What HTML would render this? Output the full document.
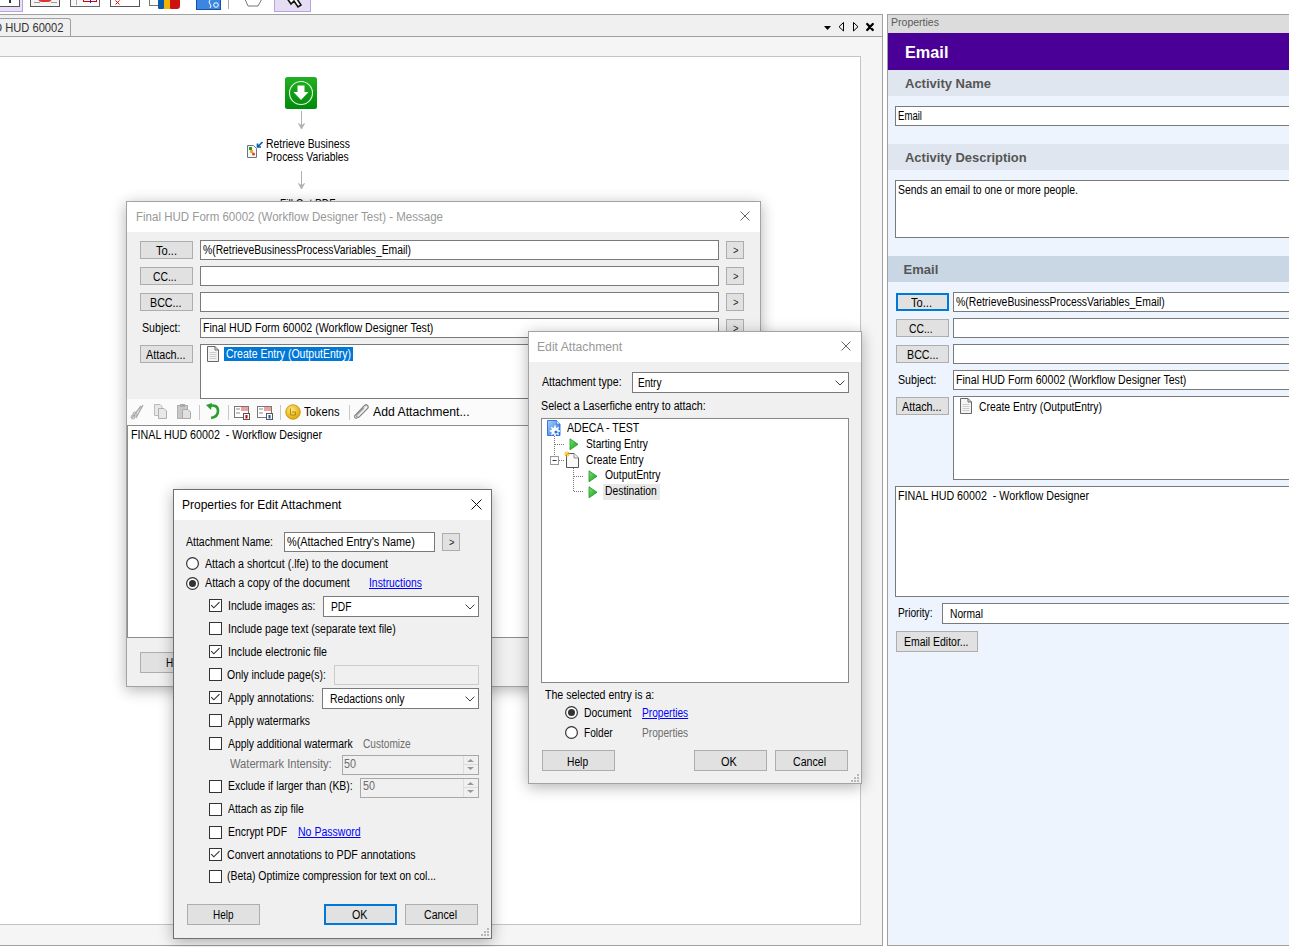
<!DOCTYPE html>
<html><head><meta charset="utf-8">
<style>
*{box-sizing:border-box;margin:0;padding:0}
html,body{width:1289px;height:947px;overflow:hidden;background:#fff;font-family:"Liberation Sans",sans-serif;font-size:12px;color:#000}
body{position:relative}
.a{position:absolute}
.t{position:absolute;white-space:nowrap;line-height:1;transform-origin:0 0}
</style></head><body>
<div class="a" style="left:0px;top:0px;width:1289px;height:15px;background:#fff;"></div>
<div class="a" id="tb"></div>
<div class="a" style="left:-2px;top:-2px;width:25px;height:14px;background:#e8e0f4;border:1px solid #b9a3e3;"></div>
<div class="a" style="left:-2px;top:-2px;width:22px;height:9px;background:#fff;border:1px solid #555;"></div>
<div class="a" style="left:9px;top:0px;width:2px;height:3px;background:#334;"></div>
<div class="a" style="left:30px;top:-2px;width:30px;height:9px;background:#f4f4f4;border:1px solid #555;"></div>
<div class="a" style="left:38px;top:-2px;width:14px;height:4px;background:#d33;border-radius:0 0 7px 7px"></div>
<div class="a" style="left:34px;top:2px;width:6px;height:1px;background:#999;"></div>
<div class="a" style="left:51px;top:2px;width:6px;height:1px;background:#999;"></div>
<div class="a" style="left:70px;top:-2px;width:30px;height:9px;background:#f8f8f8;border:1px solid #666;"></div>
<div class="a" style="left:76px;top:-2px;width:1px;height:7px;background:#aaa;"></div>
<div class="a" style="left:83px;top:-2px;width:14px;height:4px;background:#fff;border:1px solid #d00;"></div>
<div class="a" style="left:90px;top:-2px;width:1px;height:5px;background:#22c;"></div>
<div class="a" style="left:110px;top:-2px;width:30px;height:9px;background:#fff;border:1px solid #555;"></div>
<svg class="a" style="left:115px;top:0" width="6" height="5"><path d="M0.5 0.5 L4.5 4.5 M4.5 0.5 L0.5 4.5" stroke="#e00" stroke-width="1"/></svg>
<div class="a" style="left:149px;top:-2px;width:12px;height:8px;background:#fff;border:1px solid #777;"></div>
<div class="a" style="left:158px;top:-2px;width:6px;height:11px;background:#0a5aa8;border-radius:0 0 1px 1px"></div>
<div class="a" style="left:164px;top:-2px;width:6px;height:11px;background:#f0b400;"></div>
<div class="a" style="left:170px;top:-2px;width:10px;height:11px;background:#cc1111;border-radius:0 0 3px 1px"></div>
<div class="a" style="left:196px;top:-2px;width:25px;height:12px;background:#3b86e0;border:1px solid #1a4fa8;"></div>
<svg class="a" style="left:208px;top:0" width="12" height="9"><path d="M2 0 Q0 2 2 4 Q4 6 2 8" fill="none" stroke="#fff" stroke-width="1"/><circle cx="8" cy="5" r="2.3" fill="none" stroke="#fff" stroke-width="1"/></svg>
<div class="a" style="left:228px;top:-2px;width:1px;height:11px;background:#aaa;"></div>
<svg class="a" style="left:243px;top:-3" width="21" height="11"><path d="M1 0 L5 9 L15 9 L20 0" fill="#fff" stroke="#777" stroke-width="1"/></svg>
<div class="a" style="left:274px;top:-2px;width:37px;height:14px;background:#e6ddf2;border:1px solid #b7a2e3;"></div>
<svg class="a" style="left:283px;top:-6" width="20" height="16"><path d="M1 0 L1 0 L8 10 L11 7 L15 13 L18 11 L14 5 L18 3 Z" fill="#fff" stroke="#111" stroke-width="1.6"/><path d="M1 0 L7 0 L4 4 Z" fill="#111"/></svg>
<div class="a" style="left:-1px;top:14px;width:884px;height:932px;background:#f5f5f5;border:1px solid #a0a0a0;"></div>
<div class="a" style="left:0px;top:15px;width:882px;height:21px;background:#f0f0f0;"></div>
<div class="a" style="left:0px;top:36px;width:882px;height:1px;background:#a0a0a0;"></div>
<div class="a" style="left:-6px;top:18px;width:77px;height:18px;background:#f0f0f0;border:1px solid #a0a0a0;border-bottom:none;border-radius:0 3px 0 0"></div>
<div class="t" style="left:-6px;top:22.14px;font-size:12px;color:#333;transform:scaleX(0.9303);">D HUD 60002</div>
<svg class="a" style="left:824px;top:26px" width="8" height="5"><path d="M0 0 L7 0 L3.5 4 Z" fill="#000"/></svg>
<svg class="a" style="left:838px;top:22px" width="7" height="10"><path d="M5.5 0.5 L5.5 9 L1 4.75 Z" fill="none" stroke="#000" stroke-width="1"/></svg>
<svg class="a" style="left:852px;top:22px" width="7" height="10"><path d="M1.5 0.5 L1.5 9 L6 4.75 Z" fill="none" stroke="#000" stroke-width="1"/></svg>
<svg class="a" style="left:865px;top:22px" width="10" height="10"><path d="M2.2 2 L7.8 8 M7.8 2 L2.2 8" fill="none" stroke="#000" stroke-width="2.3" stroke-linecap="round"/></svg>
<div class="a" style="left:-1px;top:56px;width:862px;height:869px;background:#fff;border:1px solid #c4c4c4;"></div>
<svg class="a" style="left:284px;top:76px" width="34" height="34">
<defs><linearGradient id="gg" x1="0" y1="0" x2="0" y2="1"><stop offset="0" stop-color="#22b022"/><stop offset="1" stop-color="#008a0a"/></linearGradient></defs>
<rect x="1" y="1" width="32" height="32" rx="2.5" fill="url(#gg)"/>
<circle cx="17" cy="17" r="11.5" fill="none" stroke="#e8f5e8" stroke-width="1.1"/>
<path d="M13.5 9.5 L20.5 9.5 L20.5 16 L24.5 16 L17 24 L9.5 16 L13.5 16 Z" fill="#fff"/>
</svg>
<svg class="a" style="left:296px;top:110px" width="11" height="20"><path d="M5.5 1 L5.5 16" stroke="#b0b0b0" stroke-width="1"/><path d="M2.5 13.5 L5.5 19 L8.5 13.5 L5.5 15.5 Z" fill="#b0b0b0" stroke="#b0b0b0" stroke-width="0.8" stroke-linejoin="round"/></svg>
<svg class="a" style="left:296px;top:170px" width="11" height="20"><path d="M5.5 1 L5.5 16" stroke="#b0b0b0" stroke-width="1"/><path d="M2.5 13.5 L5.5 19 L8.5 13.5 L5.5 15.5 Z" fill="#b0b0b0" stroke="#b0b0b0" stroke-width="0.8" stroke-linejoin="round"/></svg>
<svg class="a" style="left:246px;top:141px" width="18" height="18">
<path d="M1.5 4.5 L7.5 4.5 L10.5 7.5 L10.5 16.5 L1.5 16.5 Z" fill="#f8f8f8" stroke="#6a7484" stroke-width="1"/>
<rect x="3" y="6" width="3" height="3" fill="#2a9a2a"/><rect x="4" y="9" width="3" height="3" fill="#e8b020"/><circle cx="7.5" cy="13" r="1.5" fill="#e04020"/>
<path d="M16.5 1 L11.5 6 M11.5 2.5 L11.5 6 L15 6" fill="none" stroke="#0a62aa" stroke-width="1.7"/>
</svg>
<div class="t" style="left:266.3px;top:138.14px;font-size:12px;color:#000;transform:scaleX(0.8675);">Retrieve Business</div>
<div class="t" style="left:266.3px;top:150.84px;font-size:12px;color:#000;transform:scaleX(0.8640);">Process Variables</div>
<div class="t" style="left:280.4px;top:198.34px;font-size:12px;color:#000;transform:scaleX(0.8478);">Fill Out PDF</div>
<div class="a" style="left:887px;top:14px;width:410px;height:932px;background:#edf4fe;border:1px solid #a0a0a0;"></div>
<div class="a" style="left:888px;top:15px;width:401px;height:18px;background:#dcdcdc;"></div>
<div class="t" style="left:891px;top:17.39px;font-size:11px;color:#5a5a5a;transform:scaleX(0.9573);">Properties</div>
<div class="a" style="left:888px;top:33px;width:401px;height:37px;background:#4a0096;"></div>
<div class="t" style="left:904.5px;top:45.46px;font-size:16px;color:#fff;font-weight:bold;transform:scaleX(1.0167);">Email</div>
<div class="a" style="left:888px;top:70px;width:401px;height:26px;background:#dfe6ef;"></div>
<div class="t" style="left:905px;top:76.70px;font-size:13px;color:#555;font-weight:bold;">Activity Name</div>
<div class="a" style="left:895px;top:106px;width:400px;height:20px;background:#fff;border:1px solid #7a7a7a;"></div>
<div class="t" style="left:898px;top:109.84px;font-size:12px;color:#000;transform:scaleX(0.7996);">Email</div>
<div class="a" style="left:888px;top:144px;width:401px;height:26px;background:#dfe6ef;"></div>
<div class="t" style="left:905px;top:151.00px;font-size:13px;color:#555;font-weight:bold;transform:scaleX(0.9968);">Activity Description</div>
<div class="a" style="left:895px;top:180px;width:400px;height:58px;background:#fff;border:1px solid #7a7a7a;"></div>
<div class="t" style="left:898px;top:183.84px;font-size:12px;color:#000;transform:scaleX(0.8704);">Sends an email to one or more people.</div>
<div class="a" style="left:888px;top:256px;width:401px;height:26px;background:#c9d6e4;"></div>
<div class="t" style="left:903.6px;top:263.00px;font-size:13px;color:#555;font-weight:bold;">Email</div>
<div class="a" style="left:896px;top:293px;width:53px;height:18px;background:#e1e1e1;border:2px solid #0078d7;"></div>
<div class="t" style="left:911px;top:297.04px;font-size:12px;color:#000;transform:scaleX(0.9256);">To...</div>
<div class="a" style="left:953px;top:292px;width:340px;height:20px;background:#fff;border:1px solid #7a7a7a;"></div>
<div class="t" style="left:955.5px;top:295.64px;font-size:12px;color:#000;transform:scaleX(0.8657);">%(RetrieveBusinessProcessVariables_Email)</div>
<div class="a" style="left:896px;top:319px;width:53px;height:18px;background:#e1e1e1;border:1px solid #adadad;"></div>
<div class="t" style="left:909.3px;top:323.04px;font-size:12px;color:#000;transform:scaleX(0.8631);">CC...</div>
<div class="a" style="left:953px;top:318px;width:340px;height:20px;background:#fff;border:1px solid #7a7a7a;"></div>
<div class="a" style="left:896px;top:345px;width:53px;height:18px;background:#e1e1e1;border:1px solid #adadad;"></div>
<div class="t" style="left:906.5px;top:348.84px;font-size:12px;color:#000;transform:scaleX(0.8912);">BCC...</div>
<div class="a" style="left:953px;top:344px;width:340px;height:20px;background:#fff;border:1px solid #7a7a7a;"></div>
<div class="t" style="left:897.9px;top:373.84px;font-size:12px;color:#000;transform:scaleX(0.8879);">Subject:</div>
<div class="a" style="left:953px;top:370px;width:340px;height:20px;background:#fff;border:1px solid #7a7a7a;"></div>
<div class="t" style="left:956.3px;top:373.84px;font-size:12px;color:#000;transform:scaleX(0.8851);">Final HUD Form 60002 (Workflow Designer Test)</div>
<div class="a" style="left:896px;top:397px;width:53px;height:18px;background:#e1e1e1;border:1px solid #adadad;"></div>
<div class="t" style="left:902px;top:401.24px;font-size:12px;color:#000;transform:scaleX(0.8994);">Attach...</div>
<div class="a" style="left:953px;top:396px;width:340px;height:84px;background:#fff;border:1px solid #7a7a7a;"></div>
<div class="t" style="left:978.6px;top:400.54px;font-size:12px;color:#000;transform:scaleX(0.8611);">Create Entry (OutputEntry)</div>
<svg class="a" style="left:959px;top:397px" width="14" height="18"><path d="M1.5 1.5 L9 1.5 L12.5 5 L12.5 16.5 L1.5 16.5 Z" fill="#f4f4f4" stroke="#666" stroke-width="1"/><path d="M9 1.5 L9 5 L12.5 5" fill="none" stroke="#666"/><path d="M3.5 7.5 H10.5 M3.5 9.5 H10.5 M3.5 11.5 H10.5 M3.5 13.5 H10.5" stroke="#ccc" stroke-width="1"/></svg>
<div class="a" style="left:895px;top:486px;width:400px;height:111px;background:#fff;border:1px solid #7a7a7a;"></div>
<div class="t" style="left:898px;top:489.84px;font-size:12px;color:#000;transform:scaleX(0.8922);">FINAL HUD 60002&nbsp; - Workflow Designer</div>
<div class="t" style="left:898px;top:606.84px;font-size:12px;color:#000;transform:scaleX(0.8483);">Priority:</div>
<div class="a" style="left:942px;top:603px;width:350px;height:21px;background:#fff;border:1px solid #7a7a7a;"></div>
<div class="t" style="left:950px;top:607.84px;font-size:12px;color:#000;transform:scaleX(0.8533);">Normal</div>
<div class="a" style="left:896px;top:631px;width:82px;height:21px;background:#e1e1e1;border:1px solid #adadad;"></div>
<div class="t" style="left:904px;top:636.14px;font-size:12px;color:#000;transform:scaleX(0.8713);">Email Editor...</div>
<div class="a" style="left:126px;top:201px;width:635px;height:486px;background:#f0f0f0;border:1px solid #a3a3a3;box-shadow:0 3px 14px rgba(0,0,0,0.30);"></div>
<div class="a" style="left:127px;top:202px;width:633px;height:30px;background:#fff;"></div>
<div class="t" style="left:135.5px;top:211.44px;font-size:12px;color:#999;transform:scaleX(0.9604);">Final HUD Form 60002 (Workflow Designer Test) - Message</div>
<svg class="a" style="left:740px;top:211px" width="10" height="10"><path d="M0.5 0.5 L9.5 9.5 M9.5 0.5 L0.5 9.5" fill="none" stroke="#666" stroke-width="1"/></svg>
<div class="a" style="left:140px;top:241px;width:53px;height:18px;background:#e1e1e1;border:1px solid #adadad;"></div>
<div class="t" style="left:155.8px;top:245.14px;font-size:12px;color:#000;transform:scaleX(0.9256);">To...</div>
<div class="a" style="left:200px;top:240px;width:519px;height:20px;background:#fff;border:1px solid #7a7a7a;"></div>
<div class="t" style="left:203px;top:244.14px;font-size:12px;color:#000;transform:scaleX(0.8623);">%(RetrieveBusinessProcessVariables_Email)</div>
<div class="a" style="left:726px;top:241px;width:18px;height:18px;background:#e1e1e1;border:1px solid #adadad;"></div>
<div class="t" style="left:732.5px;top:245.84px;font-size:10px;color:#222;transform:scaleX(0.9412);">&gt;</div>
<div class="a" style="left:726px;top:267px;width:18px;height:18px;background:#e1e1e1;border:1px solid #adadad;"></div>
<div class="t" style="left:732.5px;top:271.84px;font-size:10px;color:#222;transform:scaleX(0.9412);">&gt;</div>
<div class="a" style="left:726px;top:293px;width:18px;height:18px;background:#e1e1e1;border:1px solid #adadad;"></div>
<div class="t" style="left:732.5px;top:297.84px;font-size:10px;color:#222;transform:scaleX(0.9412);">&gt;</div>
<div class="a" style="left:726px;top:319px;width:18px;height:18px;background:#e1e1e1;border:1px solid #adadad;"></div>
<div class="t" style="left:732.5px;top:323.84px;font-size:10px;color:#222;transform:scaleX(0.9412);">&gt;</div>
<div class="a" style="left:140px;top:267px;width:53px;height:18px;background:#e1e1e1;border:1px solid #adadad;"></div>
<div class="t" style="left:153.3px;top:271.14px;font-size:12px;color:#000;transform:scaleX(0.8631);">CC...</div>
<div class="a" style="left:200px;top:266px;width:519px;height:20px;background:#fff;border:1px solid #7a7a7a;"></div>
<div class="a" style="left:140px;top:293px;width:53px;height:18px;background:#e1e1e1;border:1px solid #adadad;"></div>
<div class="t" style="left:149.5px;top:297.14px;font-size:12px;color:#000;transform:scaleX(0.8912);">BCC...</div>
<div class="a" style="left:200px;top:292px;width:519px;height:20px;background:#fff;border:1px solid #7a7a7a;"></div>
<div class="t" style="left:142.2px;top:322.14px;font-size:12px;color:#000;transform:scaleX(0.8879);">Subject:</div>
<div class="a" style="left:200px;top:318px;width:519px;height:20px;background:#fff;border:1px solid #7a7a7a;"></div>
<div class="t" style="left:203px;top:322.14px;font-size:12px;color:#000;transform:scaleX(0.8851);">Final HUD Form 60002 (Workflow Designer Test)</div>
<div class="a" style="left:140px;top:345px;width:53px;height:18px;background:#e1e1e1;border:1px solid #adadad;"></div>
<div class="t" style="left:146px;top:349.24px;font-size:12px;color:#000;transform:scaleX(0.8994);">Attach...</div>
<div class="a" style="left:200px;top:344px;width:560px;height:55px;background:#fff;border:1px solid #7a7a7a;"></div>
<svg class="a" style="left:206px;top:345px" width="14" height="18"><path d="M1.5 1.5 L9 1.5 L12.5 5 L12.5 16.5 L1.5 16.5 Z" fill="#f4f4f4" stroke="#666" stroke-width="1"/><path d="M9 1.5 L9 5 L12.5 5" fill="none" stroke="#666"/><path d="M3.5 7.5 H10.5 M3.5 9.5 H10.5 M3.5 11.5 H10.5 M3.5 13.5 H10.5" stroke="#ccc" stroke-width="1"/></svg>
<div class="a" style="left:224px;top:347px;width:129px;height:14px;background:#0078d7;"></div>
<div class="t" style="left:225.5px;top:347.94px;font-size:12px;color:#fff;transform:scaleX(0.8758);">Create Entry (OutputEntry)</div>
<div class="a" style="left:127px;top:399px;width:633px;height:26px;background:#fbfbfb;"></div>
<svg class="a" style="left:130px;top:403px" width="16" height="17"><path d="M2 15 L11 3 M6 15 L13 2" stroke="#a8a8a8" stroke-width="1.3"/><circle cx="3" cy="14" r="2" fill="none" stroke="#a8a8a8"/><circle cx="5" cy="11" r="2" fill="none" stroke="#a8a8a8"/></svg>
<svg class="a" style="left:153px;top:403px" width="16" height="17"><path d="M1.5 1.5 H7 L9 3.5 V12.5 H1.5 Z" fill="#e8e8e8" stroke="#bbb"/><path d="M5.5 5.5 H11 L13.5 8 V15.5 H5.5 Z" fill="#e8e8e8" stroke="#b0b0b0"/></svg>
<svg class="a" style="left:176px;top:403px" width="16" height="17"><rect x="1.5" y="2.5" width="10" height="13" fill="#c8c8c8" stroke="#b0b0b0"/><rect x="4" y="1" width="5" height="3" fill="#aaa"/><path d="M6.5 6.5 H12 L14.5 9 V15.5 H6.5 Z" fill="#e0e0e0" stroke="#aaa"/></svg>
<div class="a" style="left:199px;top:405px;width:1px;height:15px;background:#c8c8c8;"></div>
<svg class="a" style="left:205px;top:403px" width="16" height="17"><path d="M4 3 Q13 1 13 8 Q13 14 6 15" fill="none" stroke="#2aa02a" stroke-width="2.6"/><path d="M1 2 L7 0 L6 7 Z" fill="#2aa02a"/></svg>
<div class="a" style="left:228px;top:405px;width:1px;height:15px;background:#c8c8c8;"></div>
<svg class="a" style="left:234px;top:405px" width="17" height="15"><rect x="0.5" y="1.5" width="14" height="11" fill="#fff" stroke="#777"/><rect x="7" y="2" width="7" height="4" fill="#f0a0a0"/><path d="M2 4 H6 M2 8 H6" stroke="#888"/><rect x="9.5" y="8.5" width="6" height="6" fill="#fff" stroke="#555"/><rect x="11.5" y="10" width="2" height="3.5" fill="#c00"/></svg>
<svg class="a" style="left:257px;top:405px" width="17" height="15"><rect x="0.5" y="1.5" width="14" height="11" fill="#fff" stroke="#777"/><rect x="7" y="2" width="7" height="4" fill="#f0a0a0"/><path d="M2 4 H6 M2 8 H6" stroke="#888"/><rect x="9.5" y="8.5" width="6" height="6" fill="#fff" stroke="#555"/><rect x="11.5" y="10" width="2" height="3.5" fill="#1a50b0"/></svg>
<div class="a" style="left:280px;top:405px;width:1px;height:15px;background:#c8c8c8;"></div>
<svg class="a" style="left:285px;top:404px" width="16" height="16"><defs><radialGradient id="cg" cx="0.4" cy="0.35" r="0.7"><stop offset="0" stop-color="#ffe680"/><stop offset="1" stop-color="#d9a400"/></radialGradient></defs><circle cx="8" cy="8" r="7.3" fill="url(#cg)" stroke="#c89000" stroke-width="0.8"/><path d="M5.5 4.5 V11 H10.5 V8 H7" fill="none" stroke="#b88a00" stroke-width="1"/></svg>
<div class="t" style="left:304.2px;top:405.74px;font-size:12px;color:#000;transform:scaleX(0.9334);">Tokens</div>
<div class="a" style="left:349px;top:405px;width:1px;height:15px;background:#c8c8c8;"></div>
<svg class="a" style="left:353px;top:403px" width="17" height="17"><path d="M4 15.5 Q1.5 15.5 1.5 13 L11.5 2.5 Q13 1 14.5 2.5 Q16 4 14.5 5.5 L6 14 Q5 15 4 14 Q3 13 4 12 L11 5" fill="none" stroke="#8a8a8a" stroke-width="1.2"/><path d="M3 13 L12 3.5 Q13.2 2.3 14 3.2" fill="none" stroke="#bbb" stroke-width="0.8"/></svg>
<div class="t" style="left:373.1px;top:405.74px;font-size:12px;color:#000;transform:scaleX(1.0197);">Add Attachment...</div>
<div class="a" style="left:127px;top:425px;width:633px;height:213px;background:#fff;border:1px solid #8c8c8c;border-right:none"></div>
<div class="t" style="left:130.7px;top:428.84px;font-size:12px;color:#000;transform:scaleX(0.8922);">FINAL HUD 60002&nbsp; - Workflow Designer</div>
<div class="a" style="left:140px;top:652px;width:73px;height:21px;background:#e1e1e1;border:1px solid #adadad;"></div>
<div class="t" style="left:166px;top:657.04px;font-size:12px;color:#000;transform:scaleX(0.8304);">Help</div>
<div class="a" style="left:528px;top:331px;width:334px;height:453px;background:#f0f0f0;border:1px solid #a3a3a3;box-shadow:0 3px 14px rgba(0,0,0,0.30);"></div>
<div class="a" style="left:529px;top:332px;width:332px;height:30px;background:#fff;"></div>
<div class="t" style="left:537.2px;top:341.24px;font-size:12px;color:#999;transform:scaleX(1.0137);">Edit Attachment</div>
<svg class="a" style="left:841px;top:341px" width="10" height="10"><path d="M0.5 0.5 L9.5 9.5 M9.5 0.5 L0.5 9.5" fill="none" stroke="#666" stroke-width="1"/></svg>
<div class="t" style="left:542px;top:375.74px;font-size:12px;color:#000;transform:scaleX(0.8840);">Attachment type:</div>
<div class="a" style="left:632px;top:372px;width:217px;height:21px;background:#fff;border:1px solid #7a7a7a;"></div>
<div class="t" style="left:638px;top:376.84px;font-size:12px;color:#000;transform:scaleX(0.8388);">Entry</div>
<svg class="a" style="left:835px;top:380px" width="10" height="6"><path d="M0.6 0.6 L5 5 L9.4 0.6" fill="none" stroke="#333" stroke-width="0.95"/></svg>
<div class="t" style="left:541.2px;top:399.64px;font-size:12px;color:#000;transform:scaleX(0.8919);">Select a Laserfiche entry to attach:</div>
<div class="a" style="left:541px;top:418px;width:308px;height:265px;background:#fff;border:1px solid #828790;"></div>
<svg class="a" style="left:547px;top:420px" width="14" height="16"><defs><linearGradient id="bg1" x1="0" y1="0" x2="1" y2="1"><stop offset="0" stop-color="#a8d0ff"/><stop offset="1" stop-color="#2a70e0"/></linearGradient></defs><path d="M0.5 0.5 H9.5 L13 4 V15.5 H0.5 Z" fill="url(#bg1)" stroke="#1a5ad0" stroke-width="0.8"/><path d="M9.5 0.5 V4 H13" fill="#e8f2ff" stroke="#2a6ad0" stroke-width="0.6"/><circle cx="8" cy="11" r="3.6" fill="#fff"/><path d="M8 5.5 V16 M2.8 11 H13 M4.3 7.3 L11.7 14.7 M11.7 7.3 L4.3 14.7" stroke="#fff" stroke-width="1.6"/><circle cx="9" cy="12" r="1.6" fill="#2a78e0"/></svg>
<div class="t" style="left:567.3px;top:422.24px;font-size:12px;color:#000;transform:scaleX(0.8839);">ADECA - TEST</div>
<svg class="a" style="left:548px;top:435px" width="60" height="60"><path d="M6.5 1 V20 M7 9.5 H17 M11 25.5 H17 M25.5 33 V57 M26 41.5 H36 M26 56.5 H36" fill="none" stroke="#777" stroke-width="1" stroke-dasharray="1 1"/><rect x="2.5" y="21.5" width="8" height="8" fill="#fff" stroke="#999"/><path d="M4.5 25.5 H8.5" stroke="#336" stroke-width="1"/></svg>
<svg class="a" style="left:568.5px;top:438px" width="10" height="13"><defs><linearGradient id="ga5685438" x1="0" y1="0" x2="1" y2="1"><stop offset="0" stop-color="#7ee07e"/><stop offset="1" stop-color="#109a10"/></linearGradient></defs><path d="M1 0.8 L9 6.3 L1 11.8 Z" fill="url(#ga5685438)" stroke="#1a9a1a" stroke-width="0.8" stroke-linejoin="round"/></svg>
<div class="t" style="left:586.3px;top:437.54px;font-size:12px;color:#000;transform:scaleX(0.8514);">Starting Entry</div>
<svg class="a" style="left:563px;top:451px" width="18" height="18"><path d="M3.5 2.5 H11 L15.5 7 V16.5 H3.5 Z" fill="#fafafa" stroke="#555" stroke-width="1"/><path d="M11 2.5 V7 H15.5" fill="#eee" stroke="#777" stroke-width="0.8"/><path d="M4 0 V6 M1 3 H7 M2 1 L6 5 M6 1 L2 5" stroke="#f0c020" stroke-width="1"/></svg>
<div class="t" style="left:585.8px;top:453.84px;font-size:12px;color:#000;transform:scaleX(0.8551);">Create Entry</div>
<svg class="a" style="left:587.5px;top:470px" width="10" height="13"><defs><linearGradient id="ga5875470" x1="0" y1="0" x2="1" y2="1"><stop offset="0" stop-color="#7ee07e"/><stop offset="1" stop-color="#109a10"/></linearGradient></defs><path d="M1 0.8 L9 6.3 L1 11.8 Z" fill="url(#ga5875470)" stroke="#1a9a1a" stroke-width="0.8" stroke-linejoin="round"/></svg>
<div class="t" style="left:604.8px;top:469.04px;font-size:12px;color:#000;transform:scaleX(0.8652);">OutputEntry</div>
<div class="a" style="left:603px;top:484px;width:57px;height:16px;background:#e8e8e8;"></div>
<svg class="a" style="left:587.5px;top:486px" width="10" height="13"><defs><linearGradient id="ga5875486" x1="0" y1="0" x2="1" y2="1"><stop offset="0" stop-color="#7ee07e"/><stop offset="1" stop-color="#109a10"/></linearGradient></defs><path d="M1 0.8 L9 6.3 L1 11.8 Z" fill="url(#ga5875486)" stroke="#1a9a1a" stroke-width="0.8" stroke-linejoin="round"/></svg>
<div class="t" style="left:605.3px;top:485.04px;font-size:12px;color:#000;transform:scaleX(0.8627);">Destination</div>
<div class="t" style="left:544.6px;top:688.84px;font-size:12px;color:#000;transform:scaleX(0.8802);">The selected entry is a:</div>
<svg class="a" style="left:565px;top:706px" width="13" height="13"><circle cx="6.5" cy="6.5" r="5.9" fill="#fff" stroke="#333" stroke-width="1.2"/><circle cx="6.5" cy="6.5" r="3.5" fill="#333"/></svg>
<div class="t" style="left:584.2px;top:706.74px;font-size:12px;color:#000;transform:scaleX(0.8683);">Document</div>
<div class="t" style="left:642.2px;top:706.74px;font-size:12px;color:#0000ff;transform:scaleX(0.8446);text-decoration:underline;">Properties</div>
<svg class="a" style="left:565px;top:726px" width="13" height="13"><circle cx="6.5" cy="6.5" r="5.9" fill="#fff" stroke="#333" stroke-width="1.2"/></svg>
<div class="t" style="left:584.2px;top:726.54px;font-size:12px;color:#000;transform:scaleX(0.8437);">Folder</div>
<div class="t" style="left:642.2px;top:726.54px;font-size:12px;color:#6d6d6d;transform:scaleX(0.8446);">Properties</div>
<div class="a" style="left:542px;top:750px;width:73px;height:21px;background:#e1e1e1;border:1px solid #adadad;"></div>
<div class="t" style="left:567px;top:755.74px;font-size:12px;color:#000;transform:scaleX(0.8547);">Help</div>
<div class="a" style="left:694px;top:750px;width:73px;height:21px;background:#e1e1e1;border:1px solid #adadad;"></div>
<div class="t" style="left:721.4px;top:755.74px;font-size:12px;color:#000;transform:scaleX(0.9110);">OK</div>
<div class="a" style="left:775px;top:750px;width:73px;height:21px;background:#e1e1e1;border:1px solid #adadad;"></div>
<div class="t" style="left:793.1px;top:755.74px;font-size:12px;color:#000;transform:scaleX(0.8833);">Cancel</div>
<svg class="a" style="left:851px;top:774px" width="9" height="9"><g fill="#b8b8b8"><rect x="6" y="0" width="2" height="2"/><rect x="3" y="3" width="2" height="2"/><rect x="6" y="3" width="2" height="2"/><rect x="0" y="6" width="2" height="2"/><rect x="3" y="6" width="2" height="2"/><rect x="6" y="6" width="2" height="2"/></g></svg>
<div class="a" style="left:173px;top:489px;width:319px;height:450px;background:#f0f0f0;border:1px solid #6f6f6f;box-shadow:0 3px 14px rgba(0,0,0,0.30);"></div>
<div class="a" style="left:174px;top:490px;width:317px;height:30px;background:#fff;"></div>
<div class="t" style="left:182px;top:499.24px;font-size:12px;color:#000;">Properties for Edit Attachment</div>
<svg class="a" style="left:471px;top:499px" width="11" height="11"><path d="M0.5 0.5 L10.5 10.5 M10.5 0.5 L0.5 10.5" fill="none" stroke="#111" stroke-width="1"/></svg>
<div class="t" style="left:186.4px;top:535.74px;font-size:12px;color:#000;transform:scaleX(0.8755);">Attachment Name:</div>
<div class="a" style="left:284px;top:532px;width:151px;height:20px;background:#fff;border:1px solid #7a7a7a;"></div>
<div class="t" style="left:287px;top:535.74px;font-size:12px;color:#000;transform:scaleX(0.9063);">%(Attached Entry&#x27;s Name)</div>
<div class="a" style="left:442px;top:533px;width:18px;height:18px;background:#e1e1e1;border:1px solid #adadad;"></div>
<div class="t" style="left:448.5px;top:537.53px;font-size:10px;color:#222;transform:scaleX(0.9412);">&gt;</div>
<svg class="a" style="left:186px;top:557px" width="13" height="13"><circle cx="6.5" cy="6.5" r="5.9" fill="#fff" stroke="#333" stroke-width="1.2"/></svg>
<div class="t" style="left:205px;top:557.54px;font-size:12px;color:#000;transform:scaleX(0.8850);">Attach a shortcut (.lfe) to the document</div>
<svg class="a" style="left:186px;top:577px" width="13" height="13"><circle cx="6.5" cy="6.5" r="5.9" fill="#fff" stroke="#333" stroke-width="1.2"/><circle cx="6.5" cy="6.5" r="3.5" fill="#333"/></svg>
<div class="t" style="left:205px;top:577.44px;font-size:12px;color:#000;transform:scaleX(0.8932);">Attach a copy of the document</div>
<div class="t" style="left:369.4px;top:577.44px;font-size:12px;color:#0000ff;transform:scaleX(0.8621);text-decoration:underline;">Instructions</div>
<div class="a" style="left:209px;top:599px;width:13px;height:13px;background:#fff;border:1px solid #333;"></div>
<svg class="a" style="left:209px;top:599px" width="13" height="13"><path d="M2.2 6.2 L4.8 8.8 L10.5 3.2" fill="none" stroke="#333" stroke-width="1.15"/></svg>
<div class="t" style="left:228.1px;top:599.74px;font-size:12px;color:#000;transform:scaleX(0.8735);">Include images as:</div>
<div class="a" style="left:323px;top:596px;width:156px;height:21px;background:#fff;border:1px solid #7a7a7a;"></div>
<div class="t" style="left:331.2px;top:600.64px;font-size:12px;color:#000;transform:scaleX(0.8542);">PDF</div>
<svg class="a" style="left:465px;top:604px" width="10" height="6"><path d="M0.6 0.6 L5 5 L9.4 0.6" fill="none" stroke="#333" stroke-width="0.95"/></svg>
<div class="a" style="left:209px;top:622px;width:13px;height:13px;background:#fff;border:1px solid #333;"></div>
<div class="t" style="left:228px;top:622.54px;font-size:12px;color:#000;transform:scaleX(0.8790);">Include page text (separate text file)</div>
<div class="a" style="left:209px;top:645px;width:13px;height:13px;background:#fff;border:1px solid #333;"></div>
<svg class="a" style="left:209px;top:645px" width="13" height="13"><path d="M2.2 6.2 L4.8 8.8 L10.5 3.2" fill="none" stroke="#333" stroke-width="1.15"/></svg>
<div class="t" style="left:228px;top:645.64px;font-size:12px;color:#000;transform:scaleX(0.8834);">Include electronic file</div>
<div class="a" style="left:209px;top:668px;width:13px;height:13px;background:#fff;border:1px solid #333;"></div>
<div class="t" style="left:227.4px;top:668.74px;font-size:12px;color:#000;transform:scaleX(0.8713);">Only include page(s):</div>
<div class="a" style="left:334px;top:665px;width:145px;height:20px;background:#f0f0f0;border:1px solid #cccccc;"></div>
<div class="a" style="left:209px;top:691px;width:13px;height:13px;background:#fff;border:1px solid #333;"></div>
<svg class="a" style="left:209px;top:691px" width="13" height="13"><path d="M2.2 6.2 L4.8 8.8 L10.5 3.2" fill="none" stroke="#333" stroke-width="1.15"/></svg>
<div class="t" style="left:228px;top:692.24px;font-size:12px;color:#000;transform:scaleX(0.8739);">Apply annotations:</div>
<div class="a" style="left:322px;top:688px;width:157px;height:21px;background:#fff;border:1px solid #7a7a7a;"></div>
<div class="t" style="left:330.4px;top:693.14px;font-size:12px;color:#000;transform:scaleX(0.8725);">Redactions only</div>
<svg class="a" style="left:465px;top:696px" width="10" height="6"><path d="M0.6 0.6 L5 5 L9.4 0.6" fill="none" stroke="#333" stroke-width="0.95"/></svg>
<div class="a" style="left:209px;top:714px;width:13px;height:13px;background:#fff;border:1px solid #333;"></div>
<div class="t" style="left:228px;top:715.04px;font-size:12px;color:#000;transform:scaleX(0.8598);">Apply watermarks</div>
<div class="a" style="left:209px;top:737px;width:13px;height:13px;background:#fff;border:1px solid #333;"></div>
<div class="t" style="left:228px;top:738.14px;font-size:12px;color:#000;transform:scaleX(0.8655);">Apply additional watermark</div>
<div class="t" style="left:363.4px;top:738.14px;font-size:12px;color:#6d6d6d;transform:scaleX(0.8415);">Customize</div>
<div class="t" style="left:229.9px;top:757.54px;font-size:12px;color:#6d6d6d;transform:scaleX(0.9280);">Watermark Intensity:</div>
<div class="a" style="left:342px;top:755px;width:137px;height:20px;background:#f0f0f0;border:1px solid #a8a8a8;"></div>
<div class="t" style="left:344px;top:757.54px;font-size:12px;color:#6d6d6d;transform:scaleX(0.8982);">50</div>
<svg class="a" style="left:463px;top:756px" width="15" height="18"><path d="M0.5 0 V18 M0.5 8.5 H15" stroke="#ddd"/><path d="M4 6 L7.5 3 L11 6 Z M4 11 L7.5 14 L11 11 Z" fill="#999"/></svg>
<div class="a" style="left:209px;top:780px;width:13px;height:13px;background:#fff;border:1px solid #333;"></div>
<div class="t" style="left:228px;top:780.34px;font-size:12px;color:#000;transform:scaleX(0.8696);">Exclude if larger than (KB):</div>
<div class="a" style="left:360px;top:778px;width:119px;height:20px;background:#f0f0f0;border:1px solid #a8a8a8;"></div>
<div class="t" style="left:362.7px;top:780.34px;font-size:12px;color:#6d6d6d;transform:scaleX(0.8982);">50</div>
<svg class="a" style="left:463px;top:779px" width="15" height="18"><path d="M0.5 0 V18 M0.5 8.5 H15" stroke="#ddd"/><path d="M4 6 L7.5 3 L11 6 Z M4 11 L7.5 14 L11 11 Z" fill="#999"/></svg>
<div class="a" style="left:209px;top:803px;width:13px;height:13px;background:#fff;border:1px solid #333;"></div>
<div class="t" style="left:228px;top:803.44px;font-size:12px;color:#000;transform:scaleX(0.8675);">Attach as zip file</div>
<div class="a" style="left:209px;top:826px;width:13px;height:13px;background:#fff;border:1px solid #333;"></div>
<div class="t" style="left:228px;top:826.34px;font-size:12px;color:#000;transform:scaleX(0.8674);">Encrypt PDF</div>
<div class="t" style="left:298.1px;top:826.34px;font-size:12px;color:#0000ff;transform:scaleX(0.8771);text-decoration:underline;">No Password</div>
<div class="a" style="left:209px;top:848px;width:13px;height:13px;background:#fff;border:1px solid #333;"></div>
<svg class="a" style="left:209px;top:848px" width="13" height="13"><path d="M2.2 6.2 L4.8 8.8 L10.5 3.2" fill="none" stroke="#333" stroke-width="1.15"/></svg>
<div class="t" style="left:227.4px;top:848.84px;font-size:12px;color:#000;transform:scaleX(0.8835);">Convert annotations to PDF annotations</div>
<div class="a" style="left:209px;top:870px;width:13px;height:13px;background:#fff;border:1px solid #333;"></div>
<div class="t" style="left:227.4px;top:870.44px;font-size:12px;color:#000;transform:scaleX(0.8705);">(Beta) Optimize compression for text on col...</div>
<div class="a" style="left:187px;top:904px;width:73px;height:21px;background:#e1e1e1;border:1px solid #adadad;"></div>
<div class="t" style="left:212.5px;top:909.14px;font-size:12px;color:#000;transform:scaleX(0.8304);">Help</div>
<div class="a" style="left:324px;top:904px;width:73px;height:21px;background:#e1e1e1;border:2px solid #0078d7;"></div>
<div class="t" style="left:351.5px;top:909.14px;font-size:12px;color:#000;transform:scaleX(0.8937);">OK</div>
<div class="a" style="left:405px;top:904px;width:73px;height:21px;background:#e1e1e1;border:1px solid #adadad;"></div>
<div class="t" style="left:423.5px;top:909.14px;font-size:12px;color:#000;transform:scaleX(0.8833);">Cancel</div>
<svg class="a" style="left:481px;top:928px" width="9" height="9"><g fill="#b8b8b8"><rect x="6" y="0" width="2" height="2"/><rect x="3" y="3" width="2" height="2"/><rect x="6" y="3" width="2" height="2"/><rect x="0" y="6" width="2" height="2"/><rect x="3" y="6" width="2" height="2"/><rect x="6" y="6" width="2" height="2"/></g></svg>
</body></html>
